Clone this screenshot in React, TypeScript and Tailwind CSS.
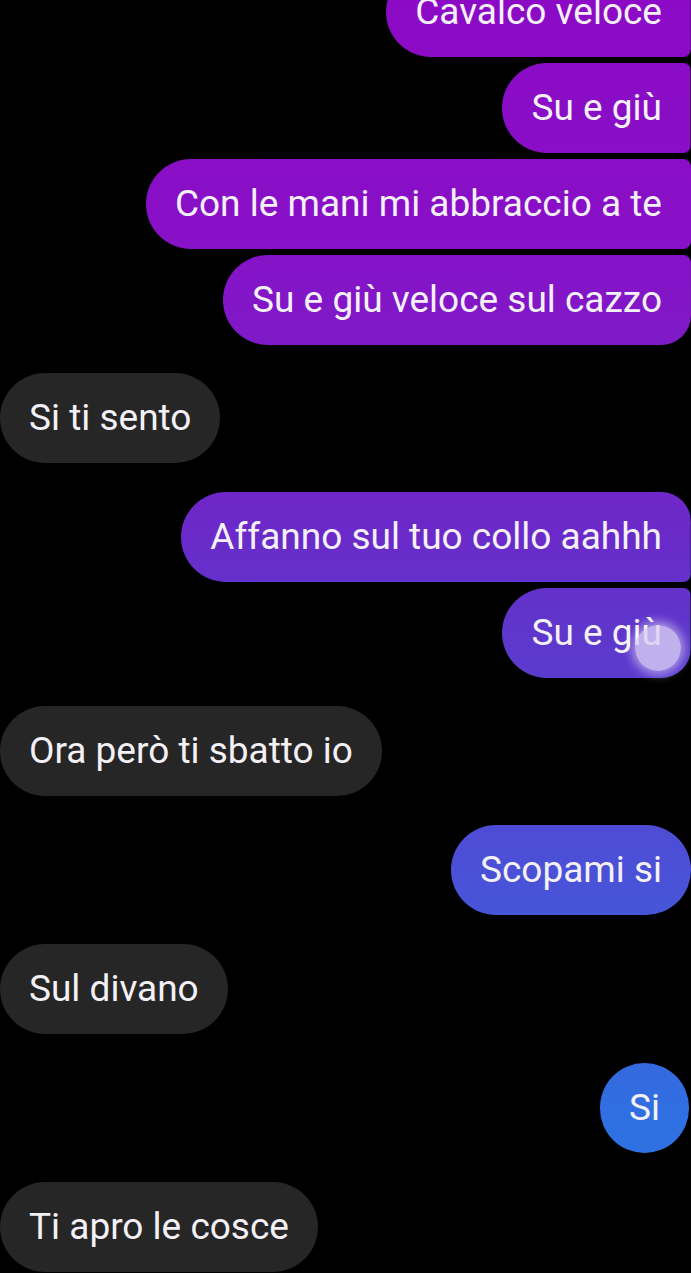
const sentBg =
  "bg-fixed bg-[linear-gradient(to_bottom,#8c0ac5_0%,#8810c7_18%,#7c1dc8_30%,#6a2ac9_42%,#5e37cc_50%,#4b50d7_68%,#3a62dd_80%,#2f70e2_88%,#2a75e4_100%)]";

type Msg = { text: string; me: boolean; shape: string; gap: string };

const messages: Msg[] = [
  { text: "Cavalco veloce", me: true, shape: "rounded-l-[45px] rounded-r-[8px]", gap: "mt-[-33px]" },
  { text: "Su e giù", me: true, shape: "rounded-l-[45px] rounded-r-[8px]", gap: "mt-[6px]" },
  { text: "Con le mani mi abbraccio a te", me: true, shape: "rounded-l-[45px] rounded-r-[8px]", gap: "mt-[6px]" },
  { text: "Su e giù veloce sul cazzo", me: true, shape: "rounded-l-[45px] rounded-tr-[8px] rounded-br-[30px]", gap: "mt-[6px]" },
  { text: "Si ti sento", me: false, shape: "rounded-[45px]", gap: "mt-[28px]" },
  { text: "Affanno sul tuo collo aahhh", me: true, shape: "rounded-l-[45px] rounded-tr-[30px] rounded-br-[8px]", gap: "mt-[29px]" },
  { text: "Su e giù", me: true, shape: "rounded-l-[45px] rounded-tr-[8px] rounded-br-[30px]", gap: "mt-[5.5px]" },
  { text: "Ora però ti sbatto io", me: false, shape: "rounded-[45px]", gap: "mt-[28.5px]" },
  { text: "Scopami si", me: true, shape: "rounded-[45px]", gap: "mt-[29px]" },
  { text: "Sul divano", me: false, shape: "rounded-[45px]", gap: "mt-[29px]" },
  { text: "Si", me: true, shape: "rounded-[45px] mr-[2px]", gap: "mt-[29px]" },
  { text: "Ti apro le cosce", me: false, shape: "rounded-[45px]", gap: "mt-[29px]" },
];

const Bubble = ({ m, touch }: { m: Msg; touch?: boolean }) => {
  return (
    <div className={`flex ${m.me ? "justify-end" : "justify-start"} ${m.gap}`}>
      <div
        className={`relative h-[90px] flex items-center px-[29px] text-[37px] text-[#f4f1f6] whitespace-nowrap ${m.shape} ${
          m.me ? sentBg : "bg-[#262626]"
        }`}
      >
        {m.text}
        {touch && (
          <span className="absolute right-[10px] top-[37px] w-[46px] h-[46px] rounded-full bg-[#d9cff5]/80 shadow-[0_0_10px_4px_rgba(255,255,255,0.45)]" />
        )}
      </div>
    </div>
  );
};

export default function App() {
  return (
    <div
      className="w-[691px] h-[1273px] bg-black overflow-hidden flex flex-col"
      style={{ fontFamily: "Roboto, 'Noto Sans', sans-serif" }}
    >
      {messages.map((m, i) => (
        <Bubble key={i} m={m} touch={i === 6} />
      ))}
    </div>
  );
}
